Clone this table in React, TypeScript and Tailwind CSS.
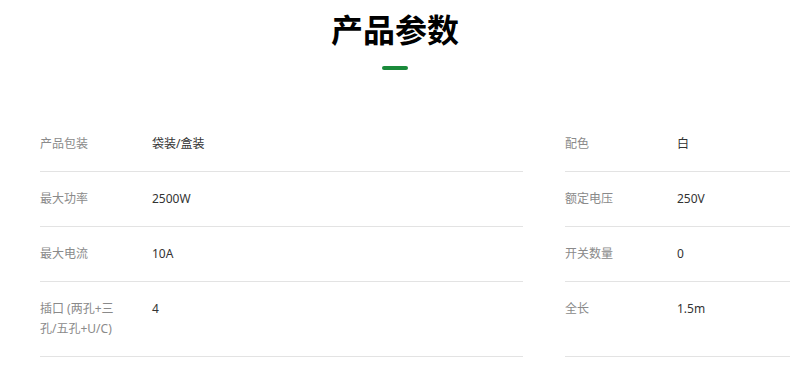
const left = [
  ["产品包装", "袋装/盒装"],
  ["最大功率", "2500W"],
  ["最大电流", "10A"],
  ["插口 (两孔+三孔/五孔+U/C)", "4"],
];

const right = [
  ["配色", "白"],
  ["额定电压", "250V"],
  ["开关数量", "0"],
  ["全长", "1.5m"],
];

function Row({ label, value }: { label: string; value: string }) {
  return (
    <div className="flex border-b border-[#e3e3e3] pt-[17px] pb-[17px] text-[12px] leading-5">
      <div className="w-[80px] shrink-0 text-[#8a8a8a]">{label}</div>
      <div className="ml-[32px] text-[#333]">{value}</div>
    </div>
  );
}

export default function App() {
  return (
    <div
      className="min-h-screen bg-white"
      style={{ fontFamily: '"Noto Sans", "Noto Sans CJK SC", sans-serif' }}
    >
      <div className="flex flex-col items-center pt-[6px]">
        <h1 className="text-[32px] font-bold leading-[48px] text-black">产品参数</h1>
        <div className="mt-[12px] h-[4px] w-[26px] rounded-full bg-[#1a8a3a]" />
      </div>
      <div className="mt-[47px] grid grid-cols-[483px_1fr] gap-x-[42px] pl-[40px]">
        {left.map(([l, v], i) => (
          <>
            <Row key={"l" + i} label={l} value={v} />
            <Row key={"r" + i} label={right[i][0]} value={right[i][1]} />
          </>
        ))}
      </div>
    </div>
  );
}
